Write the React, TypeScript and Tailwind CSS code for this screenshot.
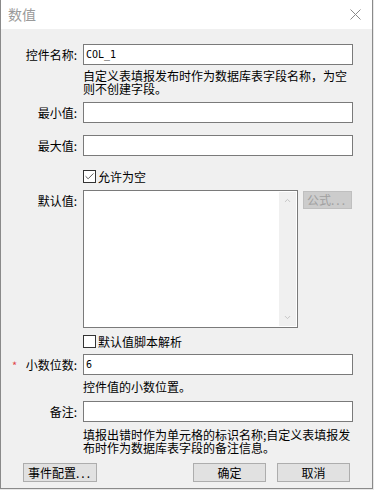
import { Check, ChevronUp, ChevronDown } from "lucide-react";

const font = { fontFamily: '"Noto Sans CJK SC", "Noto Sans", sans-serif' };

function Label({ children, top = false }: { children: React.ReactNode; top?: boolean }) {
  return (
    <div className={`w-[76px] shrink-0 text-right ${top ? "pt-[2px]" : "leading-[21px]"}`}>{children}</div>
  );
}

function TextInput({ value = "" }: { value?: string }) {
  return (
    <div className="ml-[6px] h-[21px] w-[270px] border border-[#7a7a7a] bg-white px-[2px] text-[10px] leading-[19px] text-black [font-family:'DejaVu_Sans_Mono',monospace]">
      {value}
    </div>
  );
}

function CheckBox({ checked, label }: { checked: boolean; label: string }) {
  return (
    <div className="ml-[82px] flex items-center gap-[2px] leading-[13px]">
      <div className="flex h-[13px] w-[13px] items-center justify-center border border-[#333] bg-white">
        {checked && <Check size={11} strokeWidth={1.75} className="text-[#333]" />}
      </div>
      <span>{label}</span>
    </div>
  );
}

function Button({ children, className = "" }: { children: React.ReactNode; className?: string }) {
  return (
    <div
      className={`flex h-[19px] items-center justify-center border border-[#adadad] bg-[#e1e1e1] text-black ${className}`}
    >
      {children}
    </div>
  );
}

export default function App() {
  return (
    <div className="h-[490px] w-[374px] bg-[#e8e8e8] text-[12px] text-black" style={font}>
      <div className="flex h-[489px] w-[373px] flex-col border-x border-b border-[#8a8a8a] bg-[#f0f0f0]">
        {/* Title bar */}
        <div className="flex h-[29px] shrink-0 items-center justify-between bg-white pl-[7px] pr-[11px]">
          <span className="text-[14px] text-[#9a9a9a]">数值</span>
          <svg width="11" height="11" viewBox="0 0 11 11">
            <path d="M0.5 0.5L10.5 10.5M10.5 0.5L0.5 10.5" stroke="#8a8a8a" strokeWidth="1" />
          </svg>
        </div>

        <div className="flex flex-col pt-[15px]">
          <div className="flex">
            <Label>控件名称:</Label>
            <TextInput value="COL_1" />
          </div>
          <div className="ml-[82px] mt-[4px] w-[272px] leading-[13px]">
            自定义表填报发布时作为数据库表字段名称，为空则不创建字段。
          </div>

          <div className="mt-[7px] flex">
            <Label>最小值:</Label>
            <TextInput />
          </div>

          <div className="mt-[12px] flex">
            <Label>最大值:</Label>
            <TextInput />
          </div>

          <div className="mt-[14px]">
            <CheckBox checked label="允许为空" />
          </div>

          <div className="mt-[7px] flex">
            <Label top>默认值:</Label>
            <div className="ml-[6px] flex h-[138px] w-[215px] border border-[#7a7a7a] bg-white">
              <div className="flex-1" />
              <div className="my-[1px] mr-[1px] flex w-[17px] flex-col items-center justify-between bg-[#f0f0f0] py-[4px]">
                <ChevronUp size={9} strokeWidth={2.5} className="text-[#c2c2c2]" />
                <ChevronDown size={9} strokeWidth={2.5} className="text-[#c2c2c2]" />
              </div>
            </div>
            <div className="ml-[5px] mt-[1px] flex h-[18px] w-[49px] items-center border border-[#bfbfbf] bg-[#cccccc] pl-[3px] text-[#a0a0a0]">
              公式<span className="tracking-[2px]">...</span>
            </div>
          </div>

          <div className="mt-[7px]">
            <CheckBox checked={false} label="默认值脚本解析" />
          </div>

          <div className="mt-[6px] flex">
            <div className="relative w-[76px] shrink-0 text-right leading-[21px]">
              <span className="absolute left-[11px] top-[1px] text-[11px] text-[#e0464b]">*</span>
              小数位数:
            </div>
            <TextInput value="6" />
          </div>
          <div className="ml-[82px] mt-[5px] leading-[13px]">控件值的小数位置。</div>

          <div className="mt-[8px] flex">
            <Label>备注:</Label>
            <TextInput />
          </div>
          <div className="ml-[82px] mt-[6px] w-[272px] leading-[13px]">
            填报出错时作为单元格的标识名称;自定义表填报发布时作为数据库表字段的备注信息。
          </div>

          <div className="mt-[9px] flex px-[22px]">
            <Button className="w-[74px]">
              事件配置<span className="tracking-[2px]">...</span>
            </Button>
            <div className="flex-1" />
            <Button className="w-[73px]">确定</Button>
            <Button className="ml-[11px] w-[73px]">取消</Button>
          </div>
        </div>
      </div>
    </div>
  );
}
